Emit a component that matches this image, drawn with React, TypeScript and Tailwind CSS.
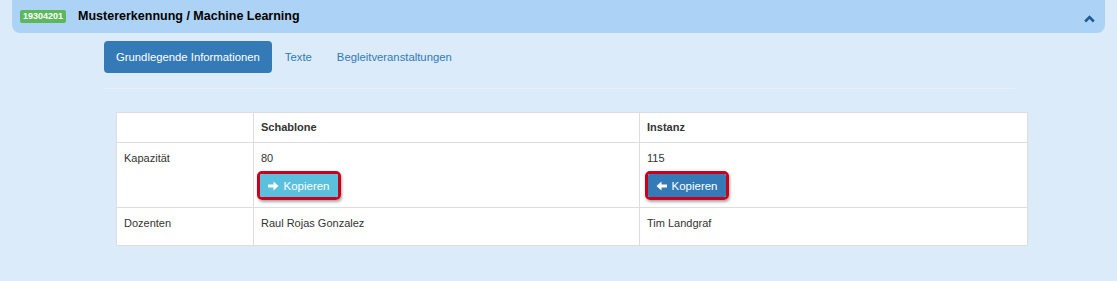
const font = { fontFamily: '"Liberation Sans", Arial, sans-serif' };

const CopyButton = ({ dir, color }: { dir: "right" | "left"; color: string }) => (
  <div className="inline-flex rounded-[5px] border-[3px] border-[#c8001e] shadow-[1px_2px_3px_rgba(0,0,0,0.35)]">
    <button
      className={`flex h-[23px] w-[78px] items-center justify-center gap-[4px] rounded-[2px] text-[11.5px] text-white ${color}`}
    >
      <svg width="11" height="10" viewBox="0 0 11 10" fill="white">
        {dir === "right" ? (
          <path d="M0 3.5h5.5V0.5L10.5 5l-5 4.5V6.5H0z" />
        ) : (
          <path d="M11 3.5H5.5V0.5L0.5 5l5 4.5V6.5H11z" />
        )}
      </svg>
      Kopieren
    </button>
  </div>
);

export default function App() {
  return (
    <div className="h-[281px] w-[1117px] bg-[#dbebfa] text-[#333]" style={font}>
      <div className="mx-[12px] flex h-[33px] items-center rounded-b-[8px] bg-[#acd3f5] pl-[8px] pr-[10px]">
        <span className="rounded-[2px] bg-[#5cb85c] px-[3px] text-[9px] font-bold leading-[13px] text-white">
          19304201
        </span>
        <span className="ml-[12px] text-[12.5px] font-bold text-black">
          Mustererkennung / Machine Learning
        </span>
        <svg className="ml-auto mt-[4px]" width="11" height="8" viewBox="0 0 11 8">
          <path d="M1.2 6.5L5.5 2.2L9.8 6.5" fill="none" stroke="#1f5a96" strokeWidth="2.6" />
        </svg>
      </div>

      <div className="ml-[104px] mr-[102px] mt-[8px] flex h-[48px] items-start border-b border-[#e6f0fb] text-[11.3px]">
        <div className="flex h-[32px] items-center rounded-[4px] bg-[#337ab7] px-[12px] text-white">
          Grundlegende Informationen
        </div>
        <div className="flex h-[32px] items-center px-[13px] text-[#337ab7]">Texte</div>
        <div className="flex h-[32px] items-center px-[12px] text-[#337ab7]">Begleitveranstaltungen</div>
      </div>

      <div className="ml-[116px] mt-[23px] w-[912px] bg-white text-[11px]">
        <table className="w-full border-collapse border border-[#dddddd]">
          <thead>
            <tr className="h-[30px]">
              <th className="w-[137px] border border-[#dddddd] px-[7px] text-left"></th>
              <th className="w-[386px] border border-[#dddddd] px-[7px] text-left font-bold">Schablone</th>
              <th className="border border-[#dddddd] px-[7px] text-left font-bold">Instanz</th>
            </tr>
          </thead>
          <tbody>
            <tr className="h-[65px]">
              <td className="border border-[#dddddd] px-[7px] pt-[8px] align-top leading-[14px]">Kapazität</td>
              <td className="border border-[#dddddd] px-[3px] pt-[8px] align-top leading-[14px]">
                <div className="pl-[4px]">80</div>
                <div className="mt-[6px]">
                  <CopyButton dir="right" color="bg-[#5bc0de]" />
                </div>
              </td>
              <td className="border border-[#dddddd] px-[5px] pt-[8px] align-top leading-[14px]">
                <div className="pl-[2px]">115</div>
                <div className="mt-[6px]">
                  <CopyButton dir="left" color="bg-[#337ab7]" />
                </div>
              </td>
            </tr>
            <tr className="h-[38px]">
              <td className="border border-[#dddddd] px-[7px] pt-[8px] align-top leading-[14px]">Dozenten</td>
              <td className="border border-[#dddddd] px-[7px] pt-[8px] align-top leading-[14px]">Raul Rojas Gonzalez</td>
              <td className="border border-[#dddddd] px-[7px] pt-[8px] align-top leading-[14px]">Tim Landgraf</td>
            </tr>
          </tbody>
        </table>
      </div>
    </div>
  );
}
